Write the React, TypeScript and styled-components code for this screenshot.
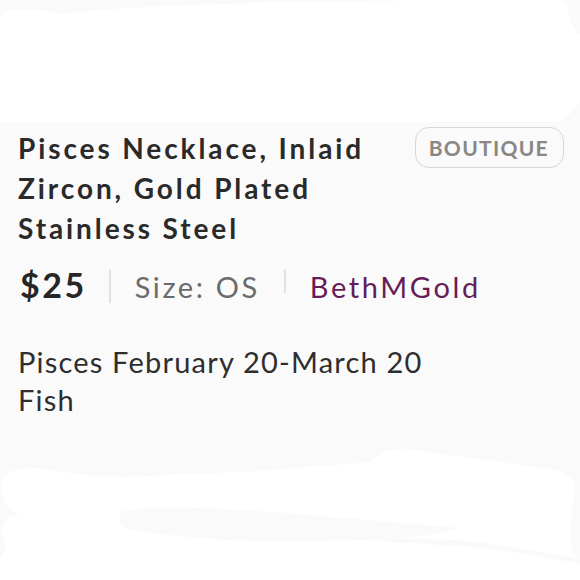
import styled, { createGlobalStyle } from 'styled-components';

const GlobalStyle = createGlobalStyle`
  html, body {
    margin: 0;
    padding: 0;
    background: #fafafa;
  }
  body {
    width: 580px;
    height: 580px;
    overflow: hidden;
    font-family: Lato, "Noto Sans", sans-serif;
  }
`;

const Page = styled.div`
  width: 580px;
  height: 580px;
  display: flex;
  flex-direction: column;
  background: #fafafa;
`;

const Scribble = styled.svg<{ h: number }>`
  display: block;
  width: 580px;
  height: ${({ h }) => h}px;
  flex: none;
`;

const Content = styled.section`
  flex: 1;
  padding: 6px 16px 0 18px;
  display: flex;
  flex-direction: column;
`;

const TitleRow = styled.div`
  display: flex;
  justify-content: space-between;
  align-items: flex-start;
`;

const Title = styled.h1`
  margin: 0;
  width: 380px;
  font-size: 28px;
  line-height: 40px;
  font-weight: 700;
  letter-spacing: 2.9px;
  color: #2a2a2a;
`;

const Badge = styled.span`
  margin-top: -1px;
  height: 39px;
  padding: 0 14px 0 13px;
  display: flex;
  align-items: center;
  border: 1px solid #d8d8d6;
  border-radius: 14px;
  font-size: 21px;
  font-weight: 700;
  letter-spacing: 1.3px;
  color: #8a8784;
`;

const MetaRow = styled.div`
  margin-top: 17px;
  height: 40px;
  display: flex;
  align-items: baseline;
  gap: 24px;
  line-height: 40px;
`;

const Price = styled.span`
  margin-left: 2px;
  margin-right: -2px;
  font-size: 34px;
  font-weight: 700;
  letter-spacing: 2.5px;
  color: #262626;
`;

const Divider = styled.span<{ top: number; h: number }>`
  align-self: flex-start;
  margin-top: ${({ top }) => top}px;
  width: 2px;
  height: ${({ h }) => h}px;
  background: #e6e1de;
`;

const Meta = styled.span<{ tone: string }>`
  font-size: 29px;
  letter-spacing: 2.6px;
  color: ${({ tone }) => tone};
`;

const Description = styled.p`
  margin: 38px 0 0;
  font-size: 29px;
  line-height: 38px;
  letter-spacing: 1.2px;
  color: #2e2e2e;
`;

const TopScribble = () => (
  <Scribble h={122} viewBox="0 0 580 122">
    <path
      d="M0 16 C10 8 30 6 58 14 C140 4 300 0 560 0 L566 4 C570 20 572 30 580 34 L580 100 C575 108 570 115 560 122 L0 122 Z"
      fill="#ffffff"
    />
  </Scribble>
);

const BottomScribble = () => (
  <Scribble h={140} viewBox="0 0 580 140">
    <path
      d="M2 42 C4 30 20 28 37 28 L85 35 L122 37 L259 31 L372 22 C380 10 395 8 407 9 L555 30 C572 34 578 42 574 56 C572 70 570 90 572 110 L580 124 L580 140 L0 140 L0 120 C4 112 8 108 4 100 C0 90 2 82 8 78 L20 74 C6 70 0 60 2 42 Z"
      fill="#ffffff"
    />
    <path
      d="M120 72 C150 64 220 68 300 74 C360 80 420 84 460 88 C440 96 400 98 372 100 C330 100 260 104 200 98 C160 94 130 92 120 84 Z"
      fill="#fafafa"
    />
    <path
      d="M372 100 C420 96 480 100 540 112 L580 118 L580 124 C560 120 520 112 480 108 C440 104 400 104 372 100 Z"
      fill="#fafafa"
    />
  </Scribble>
);

export default function App() {
  return (
    <Page>
      <GlobalStyle />
      <TopScribble />
      <Content>
        <TitleRow>
          <Title>Pisces Necklace, Inlaid Zircon, Gold Plated Stainless Steel</Title>
          <Badge>BOUTIQUE</Badge>
        </TitleRow>
        <MetaRow>
          <Price>$25</Price>
          <Divider top={5} h={33} />
          <Meta tone="#6b6b6b">Size: OS</Meta>
          <Divider top={4} h={24} />
          <Meta tone="#661d57">BethMGold</Meta>
        </MetaRow>
        <Description>
          Pisces February 20-March 20
          <br />
          Fish
        </Description>
      </Content>
      <BottomScribble />
    </Page>
  );
}
